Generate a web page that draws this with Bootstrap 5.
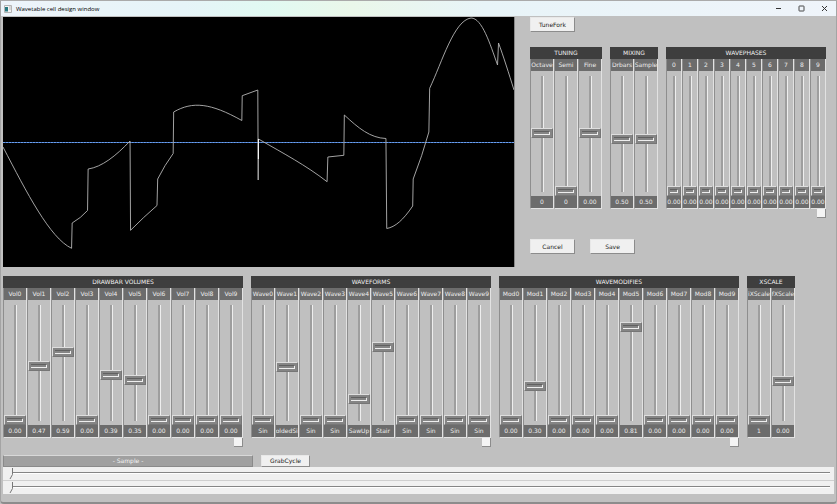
<!DOCTYPE html>
<html lang="en">
<head>
<meta charset="utf-8">
<meta name="viewport" content="width=device-width, initial-scale=1">
<title>Wavetable cell design window</title>
<link href="https://cdn.jsdelivr.net/npm/bootstrap@5.3.0/dist/css/bootstrap.min.css" rel="stylesheet">
<style>
  :root { --face: #c0c0c0; --strip: 24px; }
  body { font-family: "DejaVu Sans", sans-serif; font-size: 6px; line-height: 11px; color: #222; background: var(--face); }
  .app-window { min-height: 100vh; background: var(--face); border: 1px solid #a4a4a4; border-top-color: #aaa; border-bottom: 2px solid #8c8c8c; border-radius: 0 0 4px 4px; }
  .title-bar { height: 15px; padding-left: 3px; background: linear-gradient(90deg, #edf4fa 0, #e6f4f8 22%, #e1faf2 32%, #eaf7ea 42%, #e8f4f8 58%, #eff4fa 100%); }
  .title-bar h1 { font-family: "Open Sans", sans-serif; font-size: 6px; line-height: 14px; font-weight: 400; color: #000; }
  .caption-btn { width: 23px; height: 14px; }
  .client { padding: 1px 2px 8px; }
  .top-row, .actions { gap: 15px; }
  .actions { margin-top: 21px; }
  .scope { flex: 1 1 0; min-width: 200px; height: 250px; background: #000; border-right: 1px solid #888; }
  .side { padding-right: 8px; }
  .tune-btn { margin-bottom: 15px; }
  .face-btn { min-width: 45px; height: 15px; font-size: 6px; line-height: 11px; color: #222; background: #f0f0f0; border: 1px solid #e8e8e8; border-right-color: #8c8c8c; border-bottom-color: #8c8c8c; border-radius: 0; }
  .grab-btn { min-width: 49px; height: 12px; line-height: 10px; }
  .tab-btn { width: 9px; height: 9px; background: #f4f4f4; border: 0 solid #8c8c8c; border-width: 0 1px 1px 0; }
  .bank-title { height: 12px; line-height: 12px; font-size: 6px; font-weight: 400; color: #f0f0f0; background: #3e3e3e; }
  .strip { width: var(--strip); border-left: 1px solid #8e8e8e; border-right: 1px solid #e2e2e2; border-bottom: 1px solid #e2e2e2; }
  .narrow { --strip: 16px; }
  .strip-text { height: 12px; line-height: 12px; color: #ececec; background: #6c6c6c; }
  .fader { appearance: none; -webkit-appearance: none; writing-mode: vertical-lr; direction: rtl; display: block; width: 100%; height: 125px; margin: 0;
    background: linear-gradient(90deg, #9e9e9e 2px, #eee 2px) center / 3px 116px no-repeat; }
  .fader::-webkit-slider-runnable-track { background: transparent; width: 100%; height: 100%; }
  .fader::-webkit-slider-thumb { -webkit-appearance: none; width: calc(var(--strip) - 2px); height: 10px; border-radius: 0;
    border: 1px solid #dedede; border-right-color: #767676; border-bottom-color: #767676;
    background:
      linear-gradient(#eee, #eee) 2px 5px / calc(100% - 4px) 1px no-repeat,
      linear-gradient(#eee, #eee) right 2px top 3px / 1px 2px no-repeat,
      linear-gradient(#606060, #606060) 2px 2px / calc(100% - 5px) 1px no-repeat,
      #858585; }
  .lower { margin-top: 9px; }
  .sample-bar { width: 250px; height: 12px; line-height: 10px; color: #f4f4f4; background: #a0a0a0; border: 1px solid #8a8a8a; border-top: 1px solid #d8d8d8; }
  .scrub { appearance: none; -webkit-appearance: none; display: block; width: 100%; height: 13px; margin: 0; padding: 0 3px 0 2px;
    background: linear-gradient(#858585 1px, #fff 1px) 9px 5px / calc(100% - 13px) 2px no-repeat #f0f0f0; }
  .scrub::-webkit-slider-thumb { -webkit-appearance: none; width: 8px; height: 13px; border: 0; border-radius: 0;
    background: #f0f0f0 url("data:image/svg+xml,%3Csvg xmlns='http://www.w3.org/2000/svg' width='8' height='13'%3E%3Cpath d='M7.5 1V7.5L5 12' fill='none' stroke='%23777'/%3E%3C/svg%3E") no-repeat; }
  .scrubs { gap: 1px; background: #cfcfcf; }
</style>
<script src="https://cdn.jsdelivr.net/npm/bootstrap@5.3.0/dist/js/bootstrap.bundle.min.js"></script>
</head>
<body>
<div class="app-window">
  <header class="title-bar d-flex align-items-center">
    <svg width="8" height="8" viewBox="0 0 8 8" aria-hidden="true"><path d="M.5.5h7v7h-7z" fill="#f4f4f4" stroke="#b4b4b4"/><path d="M1 2h3v4.500H1z" fill="#287a80"/><path d="M5 2h2M5 4h2" stroke="#bbb"/></svg>
    <h1 class="mb-0 ms-1 flex-grow-1">Wavetable cell design window</h1>
    <button type="button" class="caption-btn btn p-0 border-0 d-flex align-items-center justify-content-center" aria-label="Minimize"><svg width="7" height="7"><path d="M1 3.500h5" stroke="#333"/></svg></button>
    <button type="button" class="caption-btn btn p-0 border-0 d-flex align-items-center justify-content-center" aria-label="Maximize"><svg width="7" height="7"><rect x="1" y="1" width="5" height="5" rx=".5" fill="none" stroke="#333" stroke-width=".9"/></svg></button>
    <button type="button" class="caption-btn btn p-0 border-0 d-flex align-items-center justify-content-center" aria-label="Close"><svg width="7" height="7"><path d="M1 1l5 5M6 1L1 6" stroke="#333"/></svg></button>
  </header>

  <main class="client">
    <div class="top-row d-flex">
      <svg class="scope" viewBox="3 17 512 250" preserveAspectRatio="none" role="img" aria-label="Waveform">
        <path d="M3 142.500H515" stroke="#3466b4"/>
        <path d="M3 142.500H515" stroke="#6ea0ec" stroke-dasharray="2 1"/>
        <path fill="none" stroke="#b4b4b4" stroke-width=".9" d="M3 147C27 193 50 238 71.700 248.300L72.300 223Q81 218 87.700 210.500L88.300 169C102 167 116 156 130.300 141L130.800 230.300Q144 217 157.300 205.500L158 179Q165 165 173.500 153.500L174 112C193 101 211 103 242.300 120.500L242.700 95.700L258.300 90L258.700 180L259 139C285 154 306 165 327.700 181.700L328.500 157L344.500 155.300L345 115C359 128 371 138 386.700 138.500L387.500 228.500C396 227 404 220 413.500 206L414 179Q423 156 429.700 132L430.500 88.300C443 62 455 20 472 18C483 18 491 44 498.500 65L499.500 43C504 55 510 74 515 90"/>
        <path d="M258.900 139v20" stroke="#fff"/>
      </svg>
      <div class="side">
        <button type="button" class="face-btn tune-btn p-0 d-block">TuneFork</button>
        <div class="d-flex align-items-start gap-2" id="upper-banks"></div>
        <div class="actions d-flex">
          <button type="button" class="face-btn p-0">Cancel</button>
          <button type="button" class="face-btn p-0">Save</button>
        </div>
      </div>
    </div>
    <div class="lower d-flex flex-wrap align-items-start gap-2" id="lower-banks"></div>
    <div class="d-flex gap-2 mt-2">
      <div class="sample-bar text-center">- Sample -</div>
      <button type="button" class="face-btn grab-btn p-0">GrabCycle</button>
    </div>
    <div class="scrubs d-flex flex-column">
      <input type="range" class="scrub" min="0" max="1000" value="0" aria-label="Sample position">
      <input type="range" class="scrub" min="0" max="1000" value="0" aria-label="Sample length">
    </div>
  </main>
</div>

<script>
  // Each strip: [label, shown value, fader position in thousandths]
  const numbered = (name, shown, set = {}) =>
    Array.from({ length: 10 }, (_, i) => [name + i, ...(set[i] || [shown, 0])]);

  const banks = {
    'upper-banks': [
      { title: 'TUNING', strips: [['Octave', '0', 505], ['Semi', '0', 0], ['Fine', '0.00', 505]] },
      { title: 'MIXING', strips: [['Drbars', '0.50', 448], ['Sample', '0.50', 448]] },
      { title: 'WAVEPHASES', narrow: true, tab: true, strips: numbered('', '0.00') }
    ],
    'lower-banks': [
      { title: 'DRAWBAR VOLUMES', tab: true, strips: numbered('Vol', '0.00', { 1: ['0.47', 470], 2: ['0.59', 590], 4: ['0.39', 390], 5: ['0.35', 350] }) },
      { title: 'WAVEFORMS', tab: true, strips: numbered('Wave', 'Sin', { 1: ['FoldedSin', 457], 4: ['SawUp', 183], 5: ['Stair', 635] }) },
      { title: 'WAVEMODIFIES', tab: true, strips: numbered('Mod', '0.00', { 1: ['0.30', 300], 5: ['0.81', 810] }) },
      { title: 'XSCALE', strips: [['iXScale', '1', 0], ['fXScale', '0.00', 335]] }
    ]
  };

  for (const [host, list] of Object.entries(banks)) {
    document.getElementById(host).innerHTML = list.map(bank => `
      <section class="d-flex flex-column ${bank.narrow ? 'narrow' : ''}">
        <h2 class="bank-title text-center mb-0">${bank.title}</h2>
        <div class="d-flex">${bank.strips.map(([label, shown, pos]) => {
          const id = (bank.title + '-' + label).replace(/ /g, '-').toLowerCase();
          return `<div class="strip">
            <label for="${id}" class="strip-text d-flex justify-content-center overflow-hidden text-nowrap">${label}</label>
            <input type="range" class="fader" id="${id}" min="0" max="1000" value="${pos}">
            <output for="${id}" class="strip-text d-flex justify-content-center overflow-hidden text-nowrap">${shown}</output>
          </div>`; }).join('')}</div>
        ${bank.tab ? `<button type="button" class="tab-btn p-0 align-self-end" aria-label="${bank.title} options"></button>` : ''}
      </section>`).join('');
  }
</script>
</body>
</html>
